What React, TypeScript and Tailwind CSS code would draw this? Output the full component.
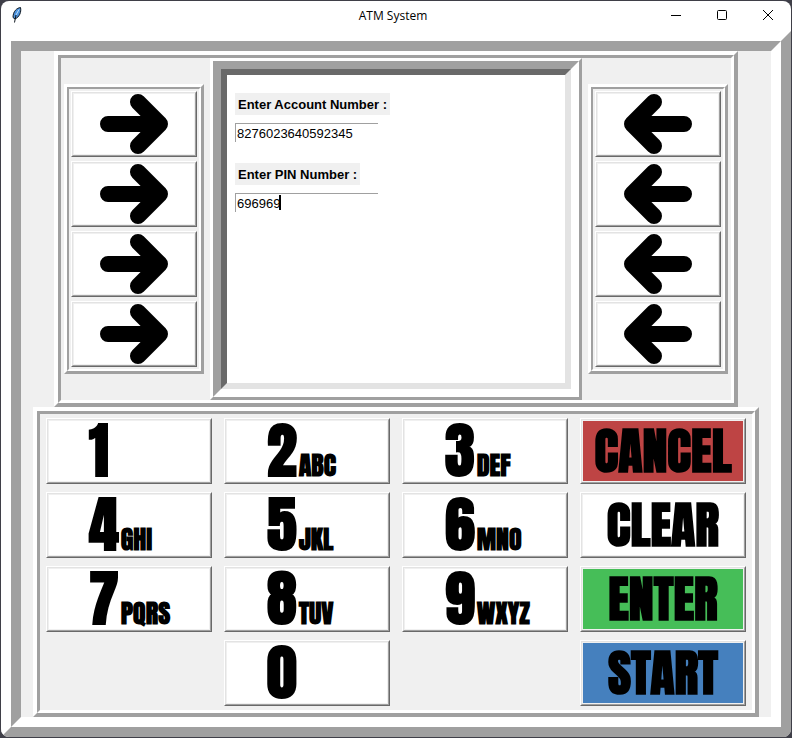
const key = 'flex h-full w-full items-center border border-t-white border-l-white border-r-[#696969] border-b-[#696969]';

function Ridge({ className, children }: { className: string; children: React.ReactNode }) {
  return (
    <div className={'border-t-white border-l-white border-r-[#a0a0a0] border-b-[#a0a0a0] ' + className}>
      {children}
    </div>
  );
}

function Groove({ className, children }: { className: string; children: React.ReactNode }) {
  return (
    <div className={'border-t-[#a0a0a0] border-l-[#a0a0a0] border-r-white border-b-white ' + className}>
      {children}
    </div>
  );
}

function RaisedButton({ label, face, children }: { label: string; face: string; children: React.ReactNode }) {
  return (
    <button type="button" aria-label={label} className={key}>
      <span className="flex h-full w-full border border-t-[#e3e3e3] border-l-[#e3e3e3] border-r-[#a0a0a0] border-b-[#a0a0a0] bg-[#f0f0f0] p-px">
        <span className={'flex h-full w-full items-center ' + face}>{children}</span>
      </span>
    </button>
  );
}

function Arrow({ left }: { left?: boolean }) {
  return (
    <svg viewBox="0 0 68 60" className={'h-[60px] w-[68px] ' + (left ? '-scale-x-100' : '')} aria-hidden="true">
      <path d="M8 30H56M38 8L60 30L38 52" fill="none" stroke="#000" strokeWidth="16" strokeLinecap="round" strokeLinejoin="round" />
    </svg>
  );
}

function ArrowColumn({ side }: { side: 'left' | 'right' }) {
  return (
    <Ridge className="w-[140px] border-3">
      <Groove className="border-2">
        <div className="grid auto-rows-[66px] gap-1 p-0.5">
          {[1, 2, 3, 4].map((n) => (
            <RaisedButton key={n} label={side + ' option ' + n} face="justify-center bg-white">
              <Arrow left={side === 'right'} />
            </RaisedButton>
          ))}
        </div>
      </Groove>
    </Ridge>
  );
}

function NumberKey({ digit, letters }: { digit: string; letters?: string }) {
  return (
    <RaisedButton label={digit} face="bg-white">
      <span className="flex items-baseline gap-0.5 pl-10 text-black">
        <span className="text-[60px] leading-[60px] font-bold">{digit}</span>
        <span className="text-[26px] leading-6 font-bold">{letters}</span>
      </span>
    </RaisedButton>
  );
}

function ActionKey({ text, face }: { text: string; face: string }) {
  return (
    <RaisedButton label={text} face={'justify-center ' + face}>
      <span className="text-[50px] leading-[60px] font-bold text-black">{text}</span>
    </RaisedButton>
  );
}

function Field({ id, label, value, children }: { id: string; label: string; value: string; children?: React.ReactNode }) {
  return (
    <div className="flex h-[70px] flex-col items-start gap-2">
      <label htmlFor={id} className="bg-[#f0f0f0] px-[3px] pt-px text-[13px] leading-[21px] font-bold text-black">
        {label}
      </label>
      <div className="relative">
        <input
          id={id}
          defaultValue={value}
          className="block h-[19px] w-[143px] border-t border-l border-[#a0a0a0] bg-white pt-px pl-px text-[13px] text-black outline-none"
        />
        {children}
      </div>
    </div>
  );
}

export default function App() {
  return (
    <div className="min-h-screen bg-[#3f3f48] p-px font-['Liberation_Sans',Arial,sans-serif]">
      <div className="overflow-hidden rounded-lg bg-white">
        <header className="grid h-[30px] grid-cols-[1fr_auto_1fr] items-start">
          <div className="flex h-7 items-center pl-[11px]">
            <svg viewBox="0 0 10 16" className="h-4 w-2.5" aria-hidden="true">
              <path d="M8.500 .5C5 1 1 4 1 10.500L3 12C7.500 10 9.500 5 8.500 .5Z" fill="#4b91dc" stroke="#101820" strokeWidth="1" />
              <path d="M4 8L2.500 15.500" fill="none" stroke="#101820" strokeWidth="1" />
              <path d="M7 2.500L4 8" fill="none" stroke="#b9dcf7" strokeWidth="1" />
            </svg>
          </div>
          <h1 className="pr-1.5 font-['Open_Sans',sans-serif] text-xs leading-[30px] text-black">ATM System</h1>
          <div className="flex justify-end">
            <button type="button" aria-label="Minimize" className="flex h-7 w-[46px] items-center justify-center">
              <svg viewBox="0 0 10 10" className="size-2.5"><path d="M0 5.500H10" stroke="#000" /></svg>
            </button>
            <button type="button" aria-label="Maximize" className="flex h-7 w-[46px] items-center justify-center">
              <svg viewBox="0 0 10 10" className="size-2.5"><rect x=".5" y=".5" width="9" height="9" rx="1" fill="none" stroke="#000" /></svg>
            </button>
            <button type="button" aria-label="Close" className="flex h-7 w-[46px] items-center justify-center">
              <svg viewBox="0 0 10 10" className="size-2.5"><path d="M0 0L10 10M10 0L0 10" stroke="#000" /></svg>
            </button>
          </div>
        </header>
        <Ridge className="border-10">
          <Groove className="border-10">
            <main className="flex flex-col items-center bg-[#f0f0f0]">
              <Ridge className="border-4">
                <Groove className="border-3">
                  <div className="flex items-center">
                    <div className="px-[3px]"><ArrowColumn side="left" /></div>
                    <div className="px-[3px]">
                      <Ridge className="border-3">
                        <Groove className="border-8">
                          <div className="h-80 w-[350px] border-6 border-t-[#696969] border-l-[#696969] border-r-[#e3e3e3] border-b-[#e3e3e3] bg-white px-2 pt-[18px]">
                            <Field id="account" label="Enter Account Number :" value="8276023640592345" />
                            <Field id="pin" label="Enter PIN Number :" value="696969">
                              <span className="absolute top-0.5 left-[44px] h-[15px] w-0.5 bg-black" />
                            </Field>
                          </div>
                        </Groove>
                      </Ridge>
                    </div>
                    <div className="px-[3px]"><ArrowColumn side="right" /></div>
                  </div>
                </Groove>
              </Ridge>
              <Ridge className="border-4">
                <Groove className="border-3">
                  <div className="grid auto-rows-[66px] grid-cols-[repeat(4,166px)] gap-x-3 gap-y-2 px-1.5 py-1 font-[Impact,Anton,'Roboto_Condensed','Liberation_Sans',sans-serif]">
                    <NumberKey digit="1" />
                    <NumberKey digit="2" letters="ABC" />
                    <NumberKey digit="3" letters="DEF" />
                    <ActionKey text="CANCEL" face="bg-[#be4444]" />
                    <NumberKey digit="4" letters="GHI" />
                    <NumberKey digit="5" letters="JKL" />
                    <NumberKey digit="6" letters="MNO" />
                    <ActionKey text="CLEAR" face="bg-white" />
                    <NumberKey digit="7" letters="PQRS" />
                    <NumberKey digit="8" letters="TUV" />
                    <NumberKey digit="9" letters="WXYZ" />
                    <ActionKey text="ENTER" face="bg-[#46be58]" />
                    <span />
                    <NumberKey digit="0" />
                    <span />
                    <ActionKey text="START" face="bg-[#4580be]" />
                  </div>
                </Groove>
              </Ridge>
            </main>
          </Groove>
        </Ridge>
      </div>
    </div>
  );
}
